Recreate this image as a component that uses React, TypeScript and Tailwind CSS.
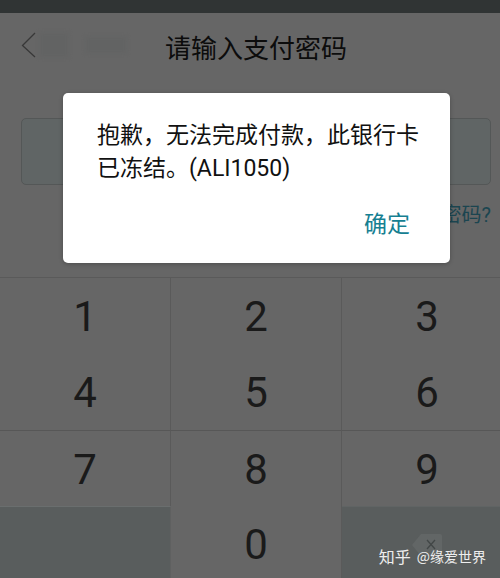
const KEYS = ['1', '2', '3', '4', '5', '6', '7', '8', '9'];

function keyClass(index: number): string {
  const column = index % 3;
  const row = Math.floor(index / 3);
  return [
    'flex items-center justify-center pt-0.5 text-[42px] leading-none text-[#1a1a1a]',
    column < 2 ? 'border-r border-r-[#5a5a5a]' : 'pl-3',
    row === 2 ? 'border-t border-t-[#575757]' : '',
  ].join(' ');
}

function Header() {
  return (
    <header className="relative flex h-[68px] items-center justify-center">
      <button type="button" aria-label="返回" className="absolute left-5 top-[18px] z-10">
        <svg width="17" height="28" viewBox="0 0 17 28" fill="none" stroke="#383838" strokeWidth="1.3">
          <path d="M15 2 L2.5 14.5 L15 26" />
        </svg>
      </button>
      <div className="absolute left-10 top-5 h-6 w-7 bg-[#626363] blur-[2px]" />
      <div className="absolute left-[86px] top-6 h-4 w-10 bg-[#626363] blur-[2px]" />
      <h1 className="pl-3 pt-1 text-[26px] leading-8 text-[#0c0c0c]">请输入支付密码</h1>
    </header>
  );
}

function Keypad() {
  return (
    <div className="grid flex-1 auto-rows-[76px] grid-cols-[171fr_171fr_158fr] border-t border-[#5a5a5a] font-[Roboto,sans-serif]">
      {KEYS.map((key, index) => (
        <button key={key} type="button" className={keyClass(index)}>
          {key}
        </button>
      ))}
      <div className="border-r border-t border-r-[#5f6060] border-t-[#6a6e6e] bg-[#595d5d]" />
      <button
        type="button"
        className="flex items-center justify-center border-r border-[#5a5a5a] pt-0.5 text-[42px] leading-none text-[#1a1a1a]"
      >
        0
      </button>
      <button
        type="button"
        aria-label="删除"
        className="flex items-center justify-center border-t border-[#606464] bg-[#595d5d] pl-3"
      >
        <svg width="34" height="24" viewBox="0 0 34 24" fill="none">
          <path d="M11 1 H30 Q32 1 32 3 V21 Q32 23 30 23 H11 L2 12 Z" fill="#626666" />
          <path d="M17 7 L25 16 M25 7 L17 16" stroke="#424747" strokeWidth="1.3" />
        </svg>
      </button>
    </div>
  );
}

function Dialog() {
  return (
    <div
      role="alertdialog"
      aria-modal="true"
      aria-labelledby="message"
      className="absolute left-[63px] right-[50px] top-[93px] z-10 flex flex-col rounded-[5px] bg-white pb-[22px] pl-[34px] pr-6 pt-[26px] shadow-[0_1px_4px_rgba(0,0,0,0.25)]"
    >
      <p id="message" className="text-[23px] leading-[33px] text-[#111111]">
        抱歉，无法完成付款，此银行卡已冻结。(ALI1050)
      </p>
      <button type="button" className="mr-4 mt-6 self-end text-[23px] leading-8 text-[#168092]">
        确定
      </button>
    </div>
  );
}

export default function App() {
  return (
    <main
      lang="zh-CN"
      className="relative flex min-h-screen flex-col overflow-hidden bg-[#666666] font-[Roboto,'Noto_Sans_CJK_SC',sans-serif]"
    >
      <div className="h-[13px] bg-[#303434]" />
      <Header />
      <form className="flex h-[196px] flex-col pl-[21px] pr-[9px] pt-[37px]">
        <input
          type="password"
          aria-label="支付密码"
          className="h-[67px] w-full rounded-[5px] border border-[#545757] bg-[#606565] px-3"
        />
        <a href="#forgot" className="mt-4 self-end text-xl leading-7 text-[#1b4550]">
          忘记密码?
        </a>
      </form>
      <Keypad />
      <Dialog />
      <div className="absolute bottom-4 right-[14px] flex items-center gap-1.5 font-['Noto_Sans_CJK_SC',sans-serif] text-sm leading-5 text-[#eeeeee]">
        <span className="text-base leading-5">知乎</span>
        <span>@缘爱世界</span>
      </div>
    </main>
  );
}
